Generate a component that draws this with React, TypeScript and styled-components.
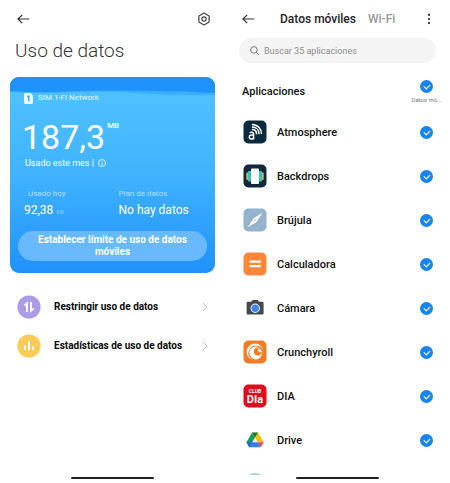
import React from "react";
import styled, { createGlobalStyle } from "styled-components";

const GlobalStyle = createGlobalStyle`
  *, *::before, *::after { box-sizing: border-box; }
  body { margin: 0; background: #fff; color: #111; font-family: Roboto, sans-serif; }
  button, input { font: inherit; color: inherit; }
  h1, h2, p, ul { margin: 0; padding: 0; font-weight: inherit; }
  svg { display: block; flex: none; }
`;

const Page = styled.div`
  display: grid;
  grid-template-columns: 1fr 1fr;
  height: 100vh;
`;

const Screen = styled.main`
  display: flex;
  flex-direction: column;
  min-width: 0;
  height: 100vh;
  overflow: hidden;
`;

const PlainButton = styled.button`
  display: flex;
  align-items: center;
  padding: 0;
  border: 0;
  background: none;
  cursor: pointer;
`;

const TopBar = styled.header`
  display: flex;
  align-items: center;
  justify-content: space-between;
  flex: none;
  height: 38px;
  padding: 0 14px 0 17px;
`;

const Title = styled.h1`
  padding: 0 15px;
  font-size: 19px;
  line-height: 26px;
  font-weight: 300;
  color: #333;
`;

const Card = styled.section`
  position: relative;
  display: flex;
  flex-direction: column;
  flex: none;
  height: 196px;
  margin: 13px 10px 0;
  padding: 14px 8px 12px;
  border-radius: 9px;
  overflow: hidden;
  color: #fff;
  background: linear-gradient(#4fc0ff 8%, #41b3ff 50%, #1f91fb);
`;

const Wave = styled.svg`
  position: absolute;
  top: 0;
  left: 0;
  width: 100%;
  height: 22px;
`;

const Network = styled.div`
  position: relative;
  display: flex;
  align-items: center;
  gap: 5px;
  padding-left: 6px;
  font-size: 8px;
  line-height: 14px;
  color: #e4f5ff;
`;

const Total = styled.div`
  display: flex;
  align-items: flex-start;
  gap: 2px;
  height: 40px;
  margin-top: 12px;
  padding-left: 4px;
`;

const TotalValue = styled.span`
  font-size: 34px;
  line-height: 40px;
`;

const TotalUnit = styled.span`
  padding-top: 4px;
  font-size: 8px;
  line-height: 10px;
  font-weight: 500;
`;

const Period = styled.div`
  display: flex;
  align-items: center;
  gap: 4px;
  padding-left: 7px;
  font-size: 9px;
  line-height: 12px;
`;

const Stats = styled.div`
  display: grid;
  grid-template-columns: 1fr 1fr;
  margin-top: 18px;
  padding: 0 6px;
`;

const Stat = styled.div`
  white-space: nowrap;
`;

const StatLabel = styled.p<{ $inset?: boolean }>`
  padding-left: ${(p) => (p.$inset ? 4 : 6)}px;
  font-size: 8px;
  line-height: 14px;
  color: #b4e0ff;
`;

const StatValue = styled.p<{ $inset?: boolean }>`
  padding-left: ${(p) => (p.$inset ? 0 : 6)}px;
  font-size: 12px;
  line-height: 18px;
`;

const SmallUnit = styled.small`
  font-size: 6px;
  color: #8dcdff;
`;

const LimitButton = styled.button`
  width: 100%;
  margin-top: auto;
  padding: 3px 16px;
  border: 0;
  border-radius: 15px;
  background: #69b9ff;
  color: #fff;
  font-size: 10px;
  line-height: 12px;
  font-weight: 700;
  cursor: pointer;
`;

const Menu = styled.nav`
  display: flex;
  flex-direction: column;
  gap: 15px;
  padding: 22px 17px 0;
`;

const MenuLink = styled.a`
  display: flex;
  align-items: center;
  gap: 13px;
  font-size: 10px;
  line-height: 24px;
  font-weight: 700;
  color: #080808;
  text-decoration: none;
  white-space: nowrap;
`;

const MenuText = styled.span`
  flex: 1;
`;

const Tabs = styled.div`
  display: flex;
  flex: 1;
  gap: 12px;
  margin-left: 25px;
  font-size: 12px;
`;

const Tab = styled(PlainButton)<{ $active?: boolean }>`
  font-weight: 500;
  color: ${(p) => (p.$active ? "#222" : "#999")};
  white-space: nowrap;
`;

const Search = styled.label`
  display: flex;
  align-items: center;
  flex: none;
  gap: 5px;
  height: 25px;
  margin: 0 14px;
  padding: 0 11px;
  border-radius: 13px;
  background: #f4f4f4;
`;

const SearchInput = styled.input`
  flex: 1;
  min-width: 0;
  padding: 0;
  border: 0;
  outline: 0;
  background: none;
  font-size: 9px;
  &::placeholder { color: #8c8c8c; opacity: 1; }
`;

const ListHeader = styled.div`
  display: flex;
  justify-content: space-between;
  align-items: center;
  flex: none;
  height: 28px;
  margin: 15px 0 4px;
  padding: 0 8px 0 17px;
`;

const ListTitle = styled.h2`
  font-size: 11px;
  line-height: 14px;
  font-weight: 500;
`;

const MasterToggle = styled.label`
  display: flex;
  flex-direction: column;
  align-items: center;
  gap: 2px;
  font-size: 6px;
  line-height: 10px;
  color: #777;
`;

const Check = styled.input.attrs({ type: "checkbox" })`
  display: grid;
  place-items: center;
  flex: none;
  appearance: none;
  width: 13px;
  height: 13px;
  margin: 0;
  border-radius: 50%;
  background: #ddd;
  cursor: pointer;
  &:checked { background: #1785ec; }
  &:checked::after {
    content: "";
    width: 6px;
    height: 4px;
    margin-bottom: 1px;
    border: solid #fff;
    border-width: 0 0 1px 1px;
    transform: rotate(-45deg);
  }
`;

const AppList = styled.ul`
  flex: 1;
  min-height: 0;
  overflow: hidden;
  list-style: none;
`;

const AppRow = styled.label`
  display: flex;
  align-items: center;
  gap: 10px;
  height: 44px;
  padding: 0 17px 0 18px;
  font-size: 11px;
  font-weight: 500;
`;

const AppName = styled.span`
  flex: 1;
`;

const HomeArea = styled.footer`
  display: flex;
  justify-content: center;
  flex: none;
  height: 8px;
  margin-top: auto;
  padding-top: 2px;
`;

const HomeBar = styled.div`
  width: 37%;
  height: 2px;
  border-radius: 1px;
  background: #222;
`;

const Back = () => (
  <svg width="13" height="12" viewBox="0 0 13 12" fill="none" stroke="#333" strokeWidth="1.2">
    <path d="M12.3 6H.9M5.2 1.9.9 6l4.3 4.1" />
  </svg>
);

const Settings = () => (
  <svg width="14" height="14" viewBox="0 0 14 14" fill="none" stroke="#444" strokeWidth="1.2" strokeLinejoin="round">
    <path d="M7 1.1 12.1 4v6L7 12.9 1.9 10V4Z" />
    <circle cx="7" cy="7" r="2.1" />
  </svg>
);

const Chevron = () => (
  <svg width="6" height="10" viewBox="0 0 6 10" fill="none" stroke="#c4c4c4">
    <path d="m1 1 4 4-4 4" />
  </svg>
);

const Tile = ({ fill, children }: { fill: string; children: React.ReactNode }) => (
  <svg width="24" height="24" viewBox="0 0 24 24" fill="none" aria-hidden="true">
    <rect x=".5" y=".5" width="23" height="23" rx="5" fill={fill} />
    {children}
  </svg>
);

const apps: { name: string; icon: React.ReactNode }[] = [
  {
    name: "Atmosphere",
    icon: (
      <Tile fill="#0c2a3e">
        <g stroke="#fff" strokeWidth="1.5">
          <path d="M6.8 12.9c.5-.8 3.8-1.3 3.8 1.2V19.5M10.6 15H8.4c-2.7 0-2.7 4-.4 4 1.6 0 2.6-.7 2.6-2.1" />
          <path d="M8.9 9.6c3 0 4.7 2 4.7 4.6M8.9 7c4.4 0 7.2 2.8 7.2 7.2M8.9 4.4c5.8 0 9.6 4.2 9.6 9.6" />
        </g>
      </Tile>
    ),
  },
  {
    name: "Backdrops",
    icon: (
      <Tile fill="#10283a">
        <rect x="3.3" y="8.5" width="2.6" height="7.5" rx="1" fill="#e0b44c" />
        <rect x="18.1" y="8.5" width="2.6" height="7.5" rx="1" fill="#e0b44c" />
        <rect x="4.9" y="7" width="4" height="10.5" rx="1" fill="#39bfba" />
        <rect x="15.1" y="7" width="4" height="10.5" rx="1" fill="#39bfba" />
        <rect x="8" y="4.4" width="8" height="15.5" rx="1" fill="#fff" />
      </Tile>
    ),
  },
  {
    name: "Brújula",
    icon: (
      <Tile fill="#94b2cb">
        <circle cx="12" cy="12" r="8.7" stroke="#9dbad3" />
        <path d="M19.5 4.8 13.6 14 4.8 19.3 10.3 10.4Z" fill="#fff" />
        <circle cx="12" cy="12.2" r=".8" fill="#94b2cb" />
      </Tile>
    ),
  },
  {
    name: "Calculadora",
    icon: (
      <Tile fill="#fb873b">
        <path d="M7.4 9.7h9.6M7.4 14.2h9.6" stroke="#fff" strokeWidth="2.2" strokeLinecap="round" />
      </Tile>
    ),
  },
  {
    name: "Cámara",
    icon: (
      <svg width="24" height="24" viewBox="0 0 24 24" aria-hidden="true">
        <path d="M5.2 5.8h3L9.7 4h5l1.5 1.8h2.9c1 0 1.5.5 1.5 1.5v9.8c0 1-.5 1.5-1.5 1.5h-14c-1 0-1.5-.5-1.5-1.5V7.3c0-1 .5-1.5 1.6-1.5Z" fill="#454a50" />
        <circle cx="12.2" cy="12.2" r="4.7" fill="#e9f1fb" />
        <circle cx="12.2" cy="12.2" r="3.7" fill="#3f83ee" />
      </svg>
    ),
  },
  {
    name: "Crunchyroll",
    icon: (
      <Tile fill="#f47a26">
        <circle cx="12" cy="12" r="8.4" fill="#fff" />
        <circle cx="13.1" cy="13.2" r="7.8" fill="#f47a26" />
        <circle cx="12.8" cy="13" r="6.4" fill="#fff" />
        <circle cx="14.9" cy="11.6" r="4" fill="#f47a26" />
        <path d="M15.6 8.2a2.2 2.2 0 1 0 3.2 3.4q-.6-2.1-3.2-3.4Z" fill="#fff" />
      </Tile>
    ),
  },
  {
    name: "DIA",
    icon: (
      <Tile fill="#e00b1c">
        <text x="12" y="9" textAnchor="middle" fontSize="5" fontWeight="700" fill="#fff">CLUB</text>
        <text x="12" y="18.5" textAnchor="middle" fontSize="11" fontWeight="700" fill="#fff">DIa</text>
      </Tile>
    ),
  },
  {
    name: "Drive",
    icon: (
      <svg width="24" height="24" viewBox="0 0 24 24" aria-hidden="true">
        <path d="M9.1 4.4 3.4 14.2l2.9 5L12 9.4Z" fill="#16a15a" />
        <path d="M14.9 4.4H9.1l5.7 9.8h5.8Z" fill="#fbbc05" />
        <path d="M9.1 4.4h5.8L12 9.4Z" fill="#087c42" />
        <path d="M9.2 14.2h5.6l2.9 5H6.3Z" fill="#367ce8" />
        <path d="M14.8 14.2h5.8l-2.9 5Z" fill="#ea4335" />
        <path d="M3.4 14.2h5.8l-2.9 5Z" fill="#2264ce" />
      </svg>
    ),
  },
];

const NextIcon = () => (
  <svg width="24" height="24" viewBox="0 0 24 24" aria-hidden="true">
    <circle cx="12" cy="12" r="11" fill="#a3d4da" />
  </svg>
);

const NextRow = styled.li`
  padding: 10px 18px 0;
`;

function UsageScreen() {
  return (
    <Screen>
      <TopBar>
        <PlainButton aria-label="Atrás"><Back /></PlainButton>
        <PlainButton aria-label="Ajustes"><Settings /></PlainButton>
      </TopBar>
      <Title>Uso de datos</Title>
      <Card>
        <Wave viewBox="0 0 205 22" preserveAspectRatio="none" aria-hidden="true">
          <path d="M0 0h205v18q-30 1-62-1-38-3-78-2Q30 17 0 15Z" fill="#3aaeff" />
          <path d="M0 0h205v16q-30-2-62-2-40-1-76 0-38 2-67 0Z" fill="#2092fc" />
        </Wave>
        <Network>
          <svg width="9" height="11" viewBox="0 0 9 11" aria-hidden="true">
            <path d="M1.3 0h5.2L9 2.4v7.2q0 1.4-1.3 1.4H1.3Q0 11 0 9.6V1.4Q0 0 1.3 0Z" fill="#e8f7ff" />
            <path d="M3.2 3.9 4.8 3v5.3" fill="none" stroke="#259bf5" strokeWidth="1.2" />
          </svg>
          SIM 1-Fi Network
        </Network>
        <Total>
          <TotalValue>187,3</TotalValue>
          <TotalUnit>MB</TotalUnit>
        </Total>
        <Period>
          Usado este mes |
          <svg width="8" height="8" viewBox="0 0 8 8" fill="none" stroke="#fff" strokeWidth=".8" aria-hidden="true">
            <circle cx="4" cy="4" r="3.5" />
            <path d="M4 3.5V6M4 2v.8" />
          </svg>
        </Period>
        <Stats>
          <Stat>
            <StatLabel $inset>Usado hoy</StatLabel>
            <StatValue $inset>92,38 <SmallUnit>KB</SmallUnit></StatValue>
          </Stat>
          <Stat>
            <StatLabel>Plan de datos</StatLabel>
            <StatValue>No hay datos</StatValue>
          </Stat>
        </Stats>
        <LimitButton>Establecer límite de uso de datos móviles</LimitButton>
      </Card>
      <Menu>
        <MenuLink href="#restringir">
          <svg width="24" height="24" viewBox="0 0 24 24" fill="none" aria-hidden="true">
            <circle cx="12" cy="12" r="11.6" fill="#ac9ce8" />
            <path d="M10 17V8.2L7.4 10.4M14 7v8.8l2.8-2.2" stroke="#fff" strokeWidth="1.9" />
          </svg>
          <MenuText>Restringir uso de datos</MenuText>
          <Chevron />
        </MenuLink>
        <MenuLink href="#estadisticas">
          <svg width="24" height="24" viewBox="0 0 24 24" fill="none" aria-hidden="true">
            <circle cx="12" cy="12" r="11.6" fill="#fbcb58" />
            <path d="M8 16v-4.5M12 16V7M16 16v-3.5" stroke="#fff" strokeWidth="2" />
          </svg>
          <MenuText>Estadísticas de uso de datos</MenuText>
          <Chevron />
        </MenuLink>
      </Menu>
      <HomeArea><HomeBar /></HomeArea>
    </Screen>
  );
}

function AppsScreen() {
  return (
    <Screen>
      <TopBar>
        <PlainButton aria-label="Atrás"><Back /></PlainButton>
        <Tabs>
          <Tab $active>Datos móviles</Tab>
          <Tab>Wi-Fi</Tab>
        </Tabs>
        <PlainButton aria-label="Más opciones">
          <svg width="14" height="12" viewBox="0 0 14 12" fill="#222">
            <circle cx="7" cy="1.9" r="1.1" /><circle cx="7" cy="6" r="1.1" /><circle cx="7" cy="10.1" r="1.1" />
          </svg>
        </PlainButton>
      </TopBar>
      <Search>
        <svg width="9" height="9" viewBox="0 0 9 9" fill="none" stroke="#777" aria-hidden="true">
          <circle cx="3.9" cy="3.9" r="3.3" /><path d="m6.3 6.3 2.4 2.4" />
        </svg>
        <SearchInput aria-label="Buscar" placeholder="Buscar 35 aplicaciones" />
      </Search>
      <ListHeader>
        <ListTitle>Aplicaciones</ListTitle>
        <MasterToggle>
          <Check defaultChecked />
          Datos mó...
        </MasterToggle>
      </ListHeader>
      <AppList>
        {apps.map((app) => (
          <li key={app.name}>
            <AppRow>
              {app.icon}
              <AppName>{app.name}</AppName>
              <Check defaultChecked />
            </AppRow>
          </li>
        ))}
        <NextRow><NextIcon /></NextRow>
      </AppList>
      <HomeArea><HomeBar /></HomeArea>
    </Screen>
  );
}

export default function App() {
  return (
    <>
      <GlobalStyle />
      <Page>
        <UsageScreen />
        <AppsScreen />
      </Page>
    </>
  );
}
